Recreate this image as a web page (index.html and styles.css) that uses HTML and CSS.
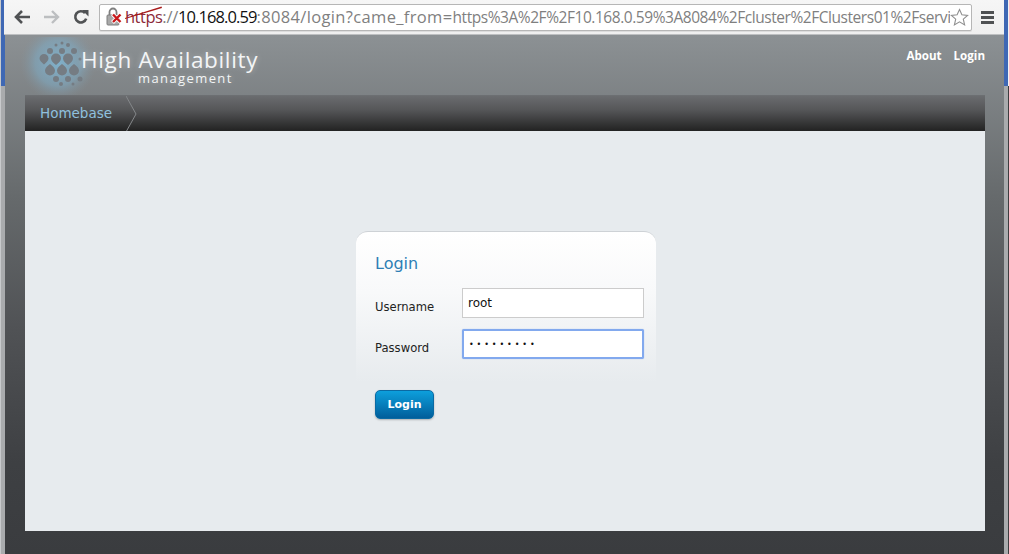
FILE: index.html
```html
<!DOCTYPE html>
<html lang="en">
<head>
<meta charset="utf-8">
<title>High Availability management</title>
<link rel="stylesheet" href="styles.css">
</head>
<body>
<div class="window">
  <div class="toolbar">
    <svg class="nav-icon back" width="16" height="14" viewBox="0 0 16 14"><path d="M8 1 2 7l6 6M2.500 7H16" fill="none" stroke="#505254" stroke-width="2.600"/></svg>
    <svg class="nav-icon forward" width="16" height="14" viewBox="0 0 16 14"><path d="m8 1 6 6-6 6M13.500 7H0" fill="none" stroke="#bcbec0" stroke-width="2.400"/></svg>
    <svg class="nav-icon reload" width="16" height="16" viewBox="0 0 16 16"><path d="M13.200 9.600A5.600 5.600 0 1 1 12 4" fill="none" stroke="#505254" stroke-width="2.600"/><path d="M9 1h6.500v6.500z" fill="#505254"/></svg>
    <div class="omnibox">
      <span class="lock">
        <svg width="18" height="20" viewBox="0 0 18 20"><path d="M3.500 8V5a3.500 3.500 0 0 1 7 0v3" fill="none" stroke="#7f7f7f" stroke-width="1.800"/><rect x="1" y="8" width="12" height="10" rx="1" fill="#a9a9a9" stroke="#7f7f7f"/><path d="m6.500 7 8.500 8.500M15 7l-8.500 8.500" stroke="#fff" stroke-width="4"/><path d="m7 7.500 7.500 7.500m0-7.500L7 15" stroke="#c8191b" stroke-width="2.400"/></svg>
      </span>
      <span class="url"><span class="scheme">https<svg class="strike" width="38" height="16" viewBox="0 0 38 16"><path d="M0 14 37 3 36.500 1.500 0 13z" fill="#a81a1a"/></svg></span><span class="dim tight">://</span><span class="host">10.168.0.59</span><span class="dim mid">:8084/login?came_from=</span><span class="dim rest">https%3A%2F%2F10.168.0.59%3A8084%2Fcluster%2FClusters01%2Fservi</span></span>
      <svg class="star" width="19" height="19" viewBox="0 0 19 19"><path d="m9.500 1.500 2.400 5.300 5.700.6-4.300 3.800 1.300 5.700-5.100-3-5.100 3 1.300-5.700L1.400 7.400l5.700-.6z" fill="#fff" stroke="#8f8f8f" stroke-width="1.100"/></svg>
    </div>
    <div class="menu-btn"><span></span><span></span><span></span></div>
  </div>
  <div class="page">
    <header class="masthead">
      <div class="brand">
        <svg class="logo" width="80" height="58" viewBox="16 37 80 58">
          <defs>
            <radialGradient id="glow"><stop offset="0" stop-color="#7fb2ce" stop-opacity=".95"/><stop offset=".6" stop-color="#7fa8bf" stop-opacity=".6"/><stop offset="1" stop-color="#84929b" stop-opacity="0"/></radialGradient>
            <path id="drop-down" d="M0 1.200C.5.800 1 .400 1-.100A1 1 0 1 0-1-.100C-1 .400-.500.800 0 1.200z"/>
            <path id="drop-up" d="M0-1.200C.5-.800 1-.400 1 .100A1 1 0 1 1-1 .100C-1-.400-.500-.800 0-1.200z"/>
          </defs>
          <circle cx="58" cy="63" r="38" fill="url(#glow)"/>
          <g fill="#757c83">
            <circle cx="62" cy="43" r="1.500"/><circle cx="56" cy="45" r="1.500"/><circle cx="68" cy="45" r="2"/>
            <circle cx="50" cy="51" r="3"/><circle cx="62" cy="51" r="3"/><circle cx="74" cy="51" r="3"/>
            <use href="#drop-down" transform="translate(44 59) scale(4.500)"/><use href="#drop-down" transform="translate(56 59) scale(5)"/><use href="#drop-down" transform="translate(68 59) scale(5)"/><circle cx="80" cy="59" r="1.500"/>
            <use href="#drop-up" transform="translate(50 70) scale(5)"/><use href="#drop-up" transform="translate(62 70) scale(5)"/><use href="#drop-up" transform="translate(74 70) scale(5)"/>
            <circle cx="56" cy="79" r="3"/><circle cx="68" cy="79" r="3"/><circle cx="80" cy="79" r="2.500"/>
            <circle cx="61" cy="84" r="2"/><circle cx="73" cy="84" r="1.500"/>
          </g>
        </svg>
        <div class="brand-text">
          <div class="brand-name">High Availability</div>
          <div class="brand-sub">management</div>
        </div>
      </div>
      <nav class="top-links"><a>About</a><a>Login</a></nav>
    </header>
    <div class="crumbs">
      <span class="crumb">Homebase</span>
      <svg class="crumb-arrow" width="12" height="36" viewBox="0 0 12 36"><path d="M0 0 10 18 0 36" fill="none" stroke="#85888b" stroke-width="1"/></svg>
    </div>
    <main class="content">
      <form class="card">
        <h2 class="card-title">Login</h2>
        <div class="row">
          <label class="row-label">Username</label>
          <div class="field">root</div>
        </div>
        <div class="row">
          <label class="row-label">Password</label>
          <div class="field focus">•••••••••</div>
        </div>
        <div class="btn">Login</div>
      </form>
    </main>
  </div>
</div>
</body>
</html>
```
FILE: styles.css
```css
* { box-sizing: border-box; }
html, body { margin: 0; height: 100%; overflow: hidden; }
body { width: 1009px; height: 554px; background: linear-gradient(#f2f2f2 0, #f2f2f2 86px, #3d3d3f 86px, #3d3d3f 100%); }
.window { height: 554px; margin: 0 1px 0 0; padding-left: 4px; padding-right: 4px;
  background: linear-gradient(#3f68b4 0, #3f68b4 86px, #a9abad 86px, #a9abad 100%); display: flex; flex-direction: column; border-left: 1px solid #c8cacc; }
.toolbar { height: 35px; flex: none; display: flex; align-items: center; background: linear-gradient(#f6f6f6, #efefef); border-bottom: 1px solid #bdbfc1; padding-left: 10px; margin-left: -1px; }
.nav-icon { flex: none; }
.back { margin-right: 14px; }
.forward { margin-right: 13px; }
.reload { margin-right: 10px; }
.omnibox { width: 873px; height: 27px; background: #fff; border: 1px solid #b6b6b6; border-radius: 2px; display: flex; align-items: center; overflow: hidden; box-shadow: 0 1px 0 #dcdcdc; flex: none; position: relative; }
.lock { width: 25px; flex: none; padding-left: 6px; display: flex; }
.url { font: 16.500px/27px "Open Sans", sans-serif; white-space: nowrap; width: 825px; overflow: hidden; color: #7f7f7f; letter-spacing: -.1px; }
.scheme { color: #8c2a3a; position: relative; letter-spacing: -.5px; }
.strike { position: absolute; left: 0; top: 0; }
.tight { letter-spacing: -.3px; }
.host { color: #111; letter-spacing: -.9px; }
.dim { color: #7f7f7f; }
.mid { letter-spacing: .35px; }
.rest { font-size: 15.500px; letter-spacing: -.45px; }
.star { position: absolute; right: 2px; top: 3px; background: #fff; }
.menu-btn { margin-left: 9px; width: 13px; display: flex; flex-direction: column; gap: 2px; flex: none; }
.menu-btn span { height: 3px; background: #4f5153; display: block; }
.page { flex: 1; display: flex; flex-direction: column; padding: 0 19px 23px 20px;
  background: linear-gradient(#8c9194 0, #666a6c 162px, #505255 295px, #3e4043 428px, #3a3c3f 100%); }
.masthead { height: 60px; flex: none; display: flex; justify-content: space-between; }
.brand { display: flex; }
.logo { flex: none; margin: 2px -15px 0 -9px; }
.brand-text { padding-top: 12px; color: #f3f5f6; text-shadow: 0 0 6px rgba(255,255,255,.35); }
.brand-name { font: 400 22.500px/25px "Open Sans", sans-serif; letter-spacing: .65px; }
.brand-sub { font: 13px/12px "Open Sans", sans-serif; letter-spacing: 1.400px; margin-left: 57px; }
.top-links { display: flex; gap: 12px; padding-top: 12px; font: bold 11.600px/18px "Open Sans", "DejaVu Sans", sans-serif; color: #fff; }
.crumbs { height: 36px; flex: none; display: flex; align-items: center; border-top: 1px solid #6c6f72; background: linear-gradient(#6a6c6f, #555658 40%, #222 100%); }
.crumb { font: 13.500px/20px "DejaVu Sans", sans-serif; color: #8fc0de; padding: 0 0 2px 15px; width: 101px; }
.crumb-arrow { flex: none; }
.content { flex: 1; background: #e7ebee; display: flex; justify-content: center; padding: 100px 0 0 2px; }
.card { width: 300px; height: 200px; border-radius: 12px 12px 0 0; border-top: 1px solid #ced2d6; padding: 21px 12px 0 19px; background: linear-gradient(#fff 0, #f8f9fa 60px, #e7ebee 150px); }
.card-title { margin: 0 0 13px; font: 400 16px/22px "DejaVu Sans", sans-serif; color: #2e7fb5; }
.row { display: flex; height: 30px; margin-bottom: 11px; }
.row-label { width: 87px; font: 11.600px/39px "DejaVu Sans", sans-serif; color: #222; }
.field { width: 182px; height: 30px; background: #fff; border: 1px solid #ccc; padding-left: 5px; font: 12px/28px "DejaVu Sans", sans-serif; color: #111; }
.focus { border: 2px solid #82a9ee; box-shadow: 0 0 1px #82a9ee; border-radius: 2px; padding-left: 5px; letter-spacing: 2.900px; font-size: 8px; line-height: 27px; }
.btn { margin-top: 31px; width: 59px; height: 29px; border-radius: 5px; background: linear-gradient(#0d9fdc, #015e9b); border: 1px solid #0b6aa3; box-shadow: 0 1px 2px rgba(0,0,0,.25); color: #fff; font: bold 11px/27px "DejaVu Sans", sans-serif; text-align: center; }
```
